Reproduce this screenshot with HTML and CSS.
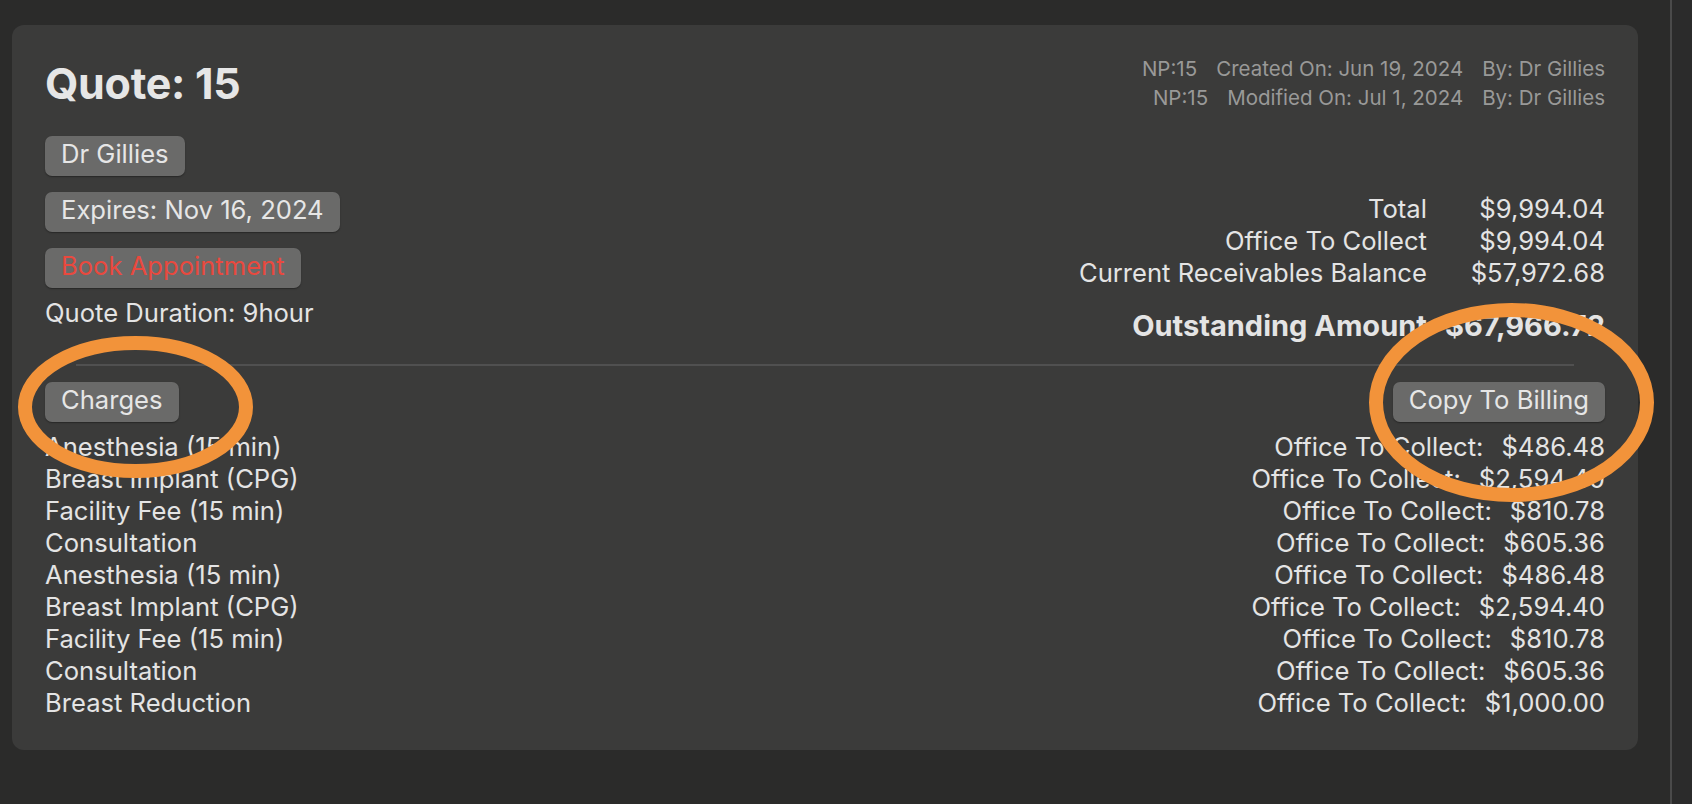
FILE: index.html
```html
<!DOCTYPE html>
<html lang="en">
<head>
<meta charset="utf-8">
<title>Quote 15</title>
<link rel="stylesheet" href="styles.css">
</head>
<body>
<div class="app">
  <main class="pane">
    <section class="card">
      <div class="top">
        <div class="left">
          <h1 class="title">Quote: 15</h1>
          <div class="btn-stack">
            <button class="btn">Dr Gillies</button>
            <button class="btn">Expires: Nov 16, 2024</button>
            <button class="btn btn-red">Book Appointment</button>
          </div>
          <p class="duration">Quote Duration: 9hour</p>
        </div>
        <div class="right">
          <div class="meta">
            <div class="meta-row"><span>NP:15</span><span>Created On: Jun 19, 2024</span><span>By: Dr Gillies</span></div>
            <div class="meta-row"><span>NP:15</span><span>Modified On: Jul 1, 2024</span><span>By: Dr Gillies</span></div>
          </div>
          <div class="totals">
            <span class="tl">Total</span><span class="tv">$9,994.04</span>
            <span class="tl">Office To Collect</span><span class="tv">$9,994.04</span>
            <span class="tl">Current Receivables Balance</span><span class="tv">$57,972.68</span>
            <span class="tl strong">Outstanding Amount</span><span class="tv strong">$67,966.72</span>
          </div>
        </div>
      </div>
      <div class="divider"></div>
      <div class="charges-head">
        <button class="btn">Charges</button>
        <button class="btn">Copy To Billing</button>
      </div>
      <div class="charges">
        <div class="row"><span>Anesthesia (15 min)</span><span class="amt"><span>Office To Collect:</span><span>$486.48</span></span></div>
        <div class="row"><span>Breast Implant (CPG)</span><span class="amt"><span>Office To Collect:</span><span>$2,594.40</span></span></div>
        <div class="row"><span>Facility Fee (15 min)</span><span class="amt"><span>Office To Collect:</span><span>$810.78</span></span></div>
        <div class="row"><span>Consultation</span><span class="amt"><span>Office To Collect:</span><span>$605.36</span></span></div>
        <div class="row"><span>Anesthesia (15 min)</span><span class="amt"><span>Office To Collect:</span><span>$486.48</span></span></div>
        <div class="row"><span>Breast Implant (CPG)</span><span class="amt"><span>Office To Collect:</span><span>$2,594.40</span></span></div>
        <div class="row"><span>Facility Fee (15 min)</span><span class="amt"><span>Office To Collect:</span><span>$810.78</span></span></div>
        <div class="row"><span>Consultation</span><span class="amt"><span>Office To Collect:</span><span>$605.36</span></span></div>
        <div class="row"><span>Breast Reduction</span><span class="amt"><span>Office To Collect:</span><span>$1,000.00</span></span></div>
      </div>
    </section>
  </main>
  <div class="sep"></div>
  <aside class="side"></aside>
  <svg class="annot" width="1692" height="804" viewBox="0 0 1692 804" aria-hidden="true">
    <ellipse cx="135.5" cy="407" rx="110.5" ry="64" fill="none" stroke="#f2933a" stroke-width="14"/>
    <ellipse cx="1511.5" cy="402.5" rx="135.5" ry="92.5" fill="none" stroke="#f2933a" stroke-width="14"/>
  </svg>
</div>
</body>
</html>
```
FILE: styles.css
```css
* { box-sizing: border-box; }
html, body { margin: 0; padding: 0; }
body {
  background: #2b2b2a;
  font-family: Inter, "Noto Sans", "Liberation Sans", sans-serif;
  color: #e4e4e4;
  width: 1692px;
  height: 804px;
  overflow: hidden;
}
.app {
  position: relative;
  display: flex;
  width: 1692px;
  height: 804px;
}
.pane {
  flex: 0 0 1670px;
  padding: 25px 32px 0 12px;
}
.card {
  background: #3b3b3a;
  border-radius: 12px;
  padding: 29px 33px 31px 33px;
}
.top {
  display: flex;
  justify-content: space-between;
  align-items: flex-start;
}
.left {
  display: flex;
  flex-direction: column;
  align-items: flex-start;
}
.title {
  margin: 4px 0 0;
  font-size: 43px;
  line-height: 50px;
  font-weight: 700;
  color: #e6e6e6;
  letter-spacing: -0.3px;
}
.btn-stack {
  margin-top: 28px;
  display: flex;
  flex-direction: column;
  align-items: flex-start;
  gap: 16px;
}
.btn {
  font-family: inherit;
  font-size: 25.6px;
  height: 40px;
  line-height: 36px;
  padding: 0 16px 4px;
  border: none;
  border-radius: 7px;
  background: #6a6a69;
  color: #e6e6e6;
  box-shadow: 0 1px 1.5px rgba(0, 0, 0, 0.35);
}
.btn-red { color: #e9493e; }
.duration {
  margin: 9px 0 0;
  font-size: 25.6px;
  line-height: 32px;
}
.right {
  display: flex;
  flex-direction: column;
  align-items: flex-end;
}
.meta {
  display: flex;
  flex-direction: column;
  align-items: flex-end;
  font-size: 20.5px;
  line-height: 29px;
  color: #999998;
}
.meta-row {
  display: flex;
  gap: 19px;
}
.totals {
  margin-top: 81px;
  display: grid;
  grid-template-columns: auto auto;
  column-gap: 18px;
  font-size: 25.6px;
  line-height: 32px;
}
.tl, .tv { text-align: right; }
.strong {
  font-weight: 700;
  font-size: 29px;
  line-height: 36px;
  margin-top: 19px;
}
.divider {
  margin: 20px 31px 0;
  height: 2px;
  background: #505050;
}
.charges-head {
  margin-top: 16px;
  display: flex;
  justify-content: space-between;
}
.charges {
  margin-top: 9px;
  font-size: 25.6px;
  line-height: 32px;
}
.row {
  display: flex;
  justify-content: space-between;
}
.amt {
  display: flex;
  gap: 18px;
}
.sep {
  flex: 0 0 2px;
  background: #4a4a4a;
}
.side {
  flex: 1;
  background: #2b2b2b;
}
.annot {
  position: absolute;
  left: 0;
  top: 0;
  pointer-events: none;
}
```
